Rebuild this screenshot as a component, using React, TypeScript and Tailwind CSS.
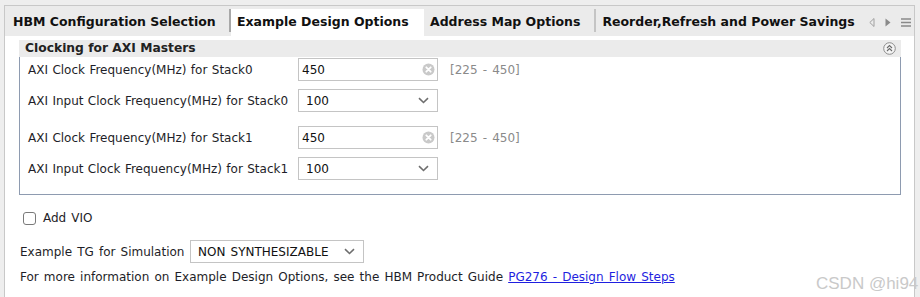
const labelCls = "w-[270px] shrink-0 text-[12px] text-[#1e1e28] [word-spacing:0.6px]";

function ClearIcon() {
  return (
    <svg width="13" height="13" viewBox="0 0 13 13">
      <circle cx="6.5" cy="6.5" r="6" fill="#c9c9c9" />
      <path d="M4.3 4.3 L8.7 8.7 M8.7 4.3 L4.3 8.7" stroke="#fff" strokeWidth="1.8" strokeLinecap="round" />
    </svg>
  );
}

function Chevron() {
  return (
    <svg width="11" height="7" viewBox="0 0 11 7">
      <path d="M1 1.2 L5.5 5.5 L10 1.2" fill="none" stroke="#6e6e6e" strokeWidth="1.6" />
    </svg>
  );
}

function TextField({ value }: { value: string }) {
  return (
    <div className="w-[140px] h-[23px] border border-[#c4c4c4] bg-white flex items-center justify-between pl-[3px] pr-[2px]">
      <span className="text-[12px] text-[#111]">{value}</span>
      <ClearIcon />
    </div>
  );
}

function Select({ value, width }: { value: string; width: string }) {
  return (
    <div className={`${width} h-[23px] border border-[#c4c4c4] bg-white flex items-center justify-between pl-[7px] pr-[8px]`}>
      <span className="text-[12px] text-[#111] whitespace-nowrap">{value}</span>
      <Chevron />
    </div>
  );
}

function FreqRow({ stack }: { stack: number }) {
  return (
    <div className="flex flex-col gap-[8px]">
      <div className="flex items-center">
        <span className={labelCls}>AXI Clock Frequency(MHz) for Stack{stack}</span>
        <TextField value="450" />
        <span className="ml-[12px] text-[12px] text-[#8a8a8a]">[225 - 450]</span>
      </div>
      <div className="flex items-center">
        <span className={labelCls}>AXI Input Clock Frequency(MHz) for Stack{stack}</span>
        <Select value="100" width="w-[140px]" />
      </div>
    </div>
  );
}

function CollapseIcon() {
  return (
    <svg width="13" height="13" viewBox="0 0 13 13">
      <circle cx="6.5" cy="6.5" r="5.8" fill="#f4f4f4" stroke="#8c8c8c" strokeWidth="1" />
      <path d="M4 6 L6.5 3.6 L9 6 M4 9 L6.5 6.6 L9 9" fill="none" stroke="#6a6a6a" strokeWidth="1.1" />
    </svg>
  );
}

function Tab({ label, active }: { label: string; active?: boolean }) {
  return (
    <div
      className={
        active
          ? "h-[27px] w-full bg-white px-[6px] pb-[1px] flex items-center whitespace-nowrap text-[12.5px] font-bold text-[#111] [word-spacing:0px]"
          : "h-[27px] px-[8px] pb-[1px] flex items-center whitespace-nowrap text-[12.5px] font-bold text-[#111] [word-spacing:0px]"
      }
    >
      {label}
    </div>
  );
}

export default function App() {
  return (
    <div className="relative w-[920px] h-[297px] bg-[#eeeeee] overflow-hidden font-['DejaVu_Sans',sans-serif] [word-spacing:1.3px]">
      <div className="ml-[4px] mt-[5px] w-[911px] h-[292px] border-l border-t border-r border-[#c8c8c8] flex flex-col">
        {/* tabs */}
        <div className="h-[30px] bg-[#ebebeb] flex items-end overflow-hidden">
          <div className="w-[224px] shrink-0 flex">
            <Tab label="HBM Configuration Selection" />
          </div>
          <div className="w-[2px] h-[23px] mb-[4px] shrink-0 bg-[#a8a8a8]" />
          <div className="w-[193px] shrink-0 flex">
            <Tab label="Example Design Options" active />
          </div>
          <div className="shrink-0 flex -ml-[2px]">
            <Tab label="Address Map Options" />
          </div>
          <div className="w-[2px] h-[23px] mb-[4px] ml-[6px] shrink-0 bg-[#c4c4c4]" />
          <div className="w-[264px] shrink-0 flex overflow-hidden -ml-[2px]">
            <Tab label="Reorder,Refresh and Power Savings" />
          </div>
          <div className="h-[27px] shrink-0 flex items-center gap-[10px] pl-[11px]">
            <svg width="6" height="9" viewBox="0 0 6 9">
              <path d="M5 0.5 L0.8 4.5 L5 8.5 Z" fill="none" stroke="#a0a0a0" strokeWidth="1" />
            </svg>
            <svg width="6" height="9" viewBox="0 0 6 9">
              <path d="M0.5 0.5 L5.5 4.5 L0.5 8.5 Z" fill="#8a8a8a" />
            </svg>
            <svg width="10" height="9" viewBox="0 0 10 9">
              <path d="M0 1 H10 M0 4.5 H10 M0 8 H10" stroke="#8a8a8a" strokeWidth="1.3" />
            </svg>
          </div>
        </div>

        {/* content */}
        <div className="flex-1 bg-white pl-[14px] pr-[13px] pt-[4px] flex flex-col">
          <div className="h-[17px] bg-[#ebebeb] flex items-center justify-between pl-[6px] pr-[5px]">
            <span className="text-[12.3px] font-bold text-[#222] [word-spacing:0px]">Clocking for AXI Masters</span>
            <CollapseIcon />
          </div>
          <div className="h-[138px] border-l border-r border-b border-[#8e9bb0] pl-[8px] pt-[1px] flex flex-col gap-[14px]">
            <FreqRow stack={0} />
            <FreqRow stack={1} />
          </div>

          <label className="mt-[14px] ml-[4px] flex items-center gap-[7px]">
            <span className="w-[13px] h-[13px] rounded-[3px] border border-[#7a7a7a] bg-white" />
            <span className="text-[12px] text-[#1e1e28]">Add VIO</span>
          </label>

          <div className="mt-[13px] ml-[1px] flex items-center">
            <span className="w-[170px] text-[12px] text-[#1e1e28]">Example TG for Simulation</span>
            <Select value="NON SYNTHESIZABLE" width="w-[174px]" />
          </div>

          <p className="mt-[5px] ml-[1px] text-[12px] text-[#1e1e28]">
            For more information on Example Design Options, see the HBM Product Guide{" "}
            <a className="text-[#1f1fe0] underline">PG276 - Design Flow Steps</a>
          </p>
        </div>
      </div>

      <span className="absolute left-[816px] top-[271px] font-['Liberation_Sans',sans-serif] text-[17px] text-[#c9c9c9] [word-spacing:0px]">
        CSDN @hi94
      </span>
    </div>
  );
}
